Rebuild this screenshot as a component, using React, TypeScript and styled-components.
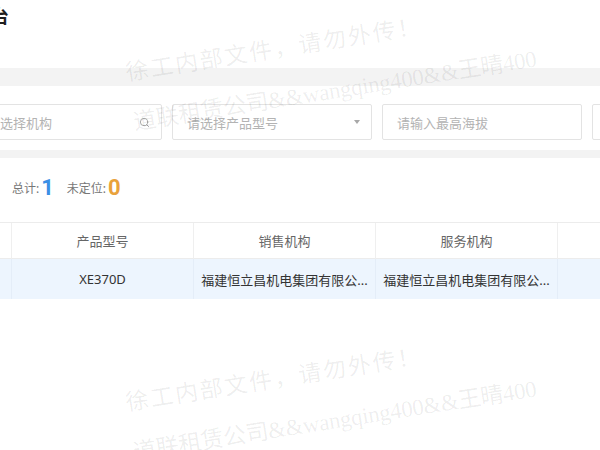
import * as React from "react";
import styled, { createGlobalStyle } from "styled-components";
import { Search } from "lucide-react";

const GlobalStyle = createGlobalStyle`
  html, body {
    margin: 0;
    padding: 0;
  }
  body {
    font-family: "Noto Sans", "Noto Sans CJK SC", sans-serif;
    background: #fff;
  }
`;

const Viewport = styled.div`
  position: relative;
  width: 600px;
  height: 450px;
  overflow: hidden;
  background: #f3f3f3;
  display: flex;
  flex-direction: column;
`;

const Header = styled.div`
  height: 68px;
  box-sizing: border-box;
  padding-top: 4px;
  background: #fff;
`;

const Title = styled.h1`
  margin: 0 0 0 -99px;
  font-size: 18px;
  line-height: 24px;
  font-weight: 700;
  color: #1f1f1f;
  white-space: nowrap;
`;

const FilterCard = styled.div`
  margin-top: 18px;
  height: 64px;
  box-sizing: border-box;
  padding-top: 18px;
  background: #fff;
`;

const FilterRow = styled.div`
  display: flex;
  gap: 10px;
  margin-left: -28px;
`;

const Field = styled.div<{ $w: number }>`
  flex: none;
  width: ${p => p.$w}px;
  height: 36px;
  box-sizing: border-box;
  border: 1px solid #e3e3e3;
  border-radius: 2px;
  display: flex;
  align-items: center;
  justify-content: space-between;
  padding: 0 11px 0 14px;
  background: #fff;
`;

const Placeholder = styled.span`
  font-size: 13px;
  color: #b3b3b3;
  white-space: nowrap;
`;

const Caret = styled.span`
  width: 0;
  height: 0;
  border-left: 3.5px solid transparent;
  border-right: 3.5px solid transparent;
  border-top: 4px solid #a8a8a8;
`;

const ListCard = styled.div`
  margin-top: 8px;
  flex: 1;
  padding-top: 18px;
  background: #fff;
`;

const CountBar = styled.div`
  display: flex;
  align-items: center;
  gap: 13px;
  height: 24px;
  padding-left: 12px;
`;

const CountItem = styled.div`
  display: flex;
  align-items: center;
  gap: 2px;
`;

const CountLabel = styled.span`
  font-size: 12px;
  color: #777;
`;

const CountValue = styled.span<{ $color: string }>`
  font-family: Roboto, "Liberation Sans", sans-serif;
  font-size: 22px;
  line-height: 24px;
  font-weight: 700;
  color: ${p => p.$color};
`;

const Table = styled.div`
  margin-top: 22px;
  margin-left: -170px;
  display: grid;
  grid-template-columns: repeat(5, 182px);
  border-top: 1px solid #ececec;
`;

const HeadCell = styled.div`
  height: 35px;
  display: flex;
  align-items: center;
  justify-content: center;
  font-size: 13px;
  color: #666;
  border-right: 1px solid #efefef;
  border-bottom: 1px solid #ececec;
  white-space: nowrap;
`;

const BodyCell = styled.div`
  height: 40px;
  display: flex;
  align-items: center;
  justify-content: center;
  font-size: 13px;
  color: #333;
  background: #edf5fe;
  border-right: 1px solid #e4edf8;
  white-space: nowrap;
  overflow: hidden;
`;

const WatermarkLayer = styled.div`
  position: absolute;
  inset: 0;
  pointer-events: none;
  z-index: 10;
`;

const WatermarkTile = styled.div<{ $top: number }>`
  position: absolute;
  left: 122px;
  top: ${p => p.$top}px;
  transform: rotate(-9deg);
  transform-origin: 0 0;
  font-family: "Liberation Serif", "Noto Sans CJK SC", serif;
  font-size: 23px;
  line-height: 50px;
  color: rgba(0, 0, 0, 0.075);
  white-space: nowrap;
`;

const WatermarkLine = styled.div<{ $spacing?: number }>`
  letter-spacing: ${p => p.$spacing || 0}px;
`;

const headers = ["设备编号", "产品型号", "销售机构", "服务机构", "定位时间"];
const row = ["XG0001", "XE370D", "福建恒立昌机电集团有限公...", "福建恒立昌机电集团有限公...", "2023-05-12"];

const Watermark = ({ top }: { top: number }) => (
  <WatermarkTile $top={top}>
    <WatermarkLine $spacing={2}>徐工内部文件，请勿外传！</WatermarkLine>
    <WatermarkLine $spacing={-0.3}>道联租赁公司&amp;&amp;wangqing400&amp;&amp;王晴400</WatermarkLine>
  </WatermarkTile>
);

export default function App() {
  return (
    <>
      <GlobalStyle />
      <Viewport>
        <Header>
          <Title>设备定位平台</Title>
        </Header>
        <FilterCard>
          <FilterRow>
            <Field $w={190}>
              <Placeholder>请选择机构</Placeholder>
              <Search size={11} color="#a0a0a0" strokeWidth={2} />
            </Field>
            <Field $w={200}>
              <Placeholder>请选择产品型号</Placeholder>
              <Caret />
            </Field>
            <Field $w={200}>
              <Placeholder>请输入最高海拔</Placeholder>
            </Field>
            <Field $w={200}>
              <Placeholder>请输入最低海拔</Placeholder>
            </Field>
          </FilterRow>
        </FilterCard>
        <ListCard>
          <CountBar>
            <CountItem>
              <CountLabel>总计:</CountLabel>
              <CountValue $color="#3b8fe5">1</CountValue>
            </CountItem>
            <CountItem>
              <CountLabel>未定位:</CountLabel>
              <CountValue $color="#e9a23b">0</CountValue>
            </CountItem>
          </CountBar>
          <Table>
            {headers.map(h => (
              <HeadCell key={h}>{h}</HeadCell>
            ))}
            {row.map((c, i) => (
              <BodyCell key={i}>{c}</BodyCell>
            ))}
          </Table>
        </ListCard>
        <WatermarkLayer>
          <Watermark top={49} />
          <Watermark top={379} />
        </WatermarkLayer>
      </Viewport>
    </>
  );
}
